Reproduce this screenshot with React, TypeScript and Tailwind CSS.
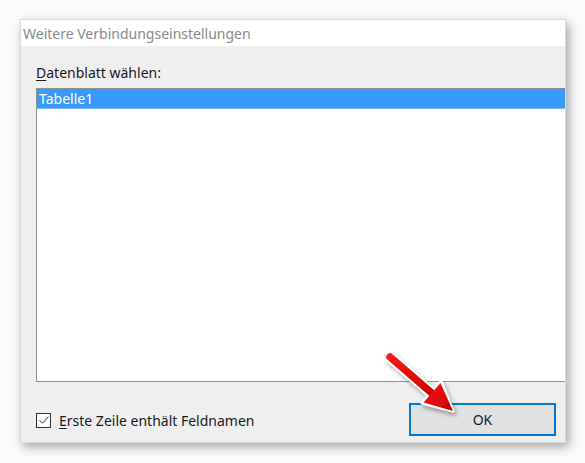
import React from "react";

const font = { fontFamily: '"Noto Sans", "Open Sans", Arial, sans-serif' };

function Arrow() {
  // red pointer arrow drawn over the dialog, page coordinates
  return (
    <svg
      className="absolute left-0 top-0 pointer-events-none"
      width={585}
      height={463}
      viewBox="0 0 585 463"
    >
      <defs>
        <filter id="sh" x="-20%" y="-20%" width="140%" height="140%">
          <feDropShadow dx="2" dy="3" stdDeviation="2" floodColor="#000" floodOpacity="0.35" />
        </filter>
        <linearGradient id="rd" x1="0" y1="0" x2="1" y2="1">
          <stop offset="0" stopColor="#f41a1a" />
          <stop offset="1" stopColor="#cc0000" />
        </linearGradient>
      </defs>
      <g filter="url(#sh)">
        <line x1="390" y1="357" x2="434" y2="395" stroke="#fff" strokeWidth="11" strokeLinecap="round" />
        <polygon points="453,411 422,403 441,381" fill="#fff" stroke="#fff" strokeWidth="3" strokeLinejoin="round" />
        <line x1="390" y1="357" x2="434" y2="395" stroke="url(#rd)" strokeWidth="7.5" strokeLinecap="round" />
        <polygon points="453,411 423.5,402.5 440.5,383" fill="url(#rd)" />
      </g>
    </svg>
  );
}

export default function App() {
  return (
    <div className="relative w-[585px] h-[463px] bg-[#fbfbfb] overflow-hidden" style={font}>
      <div className="absolute left-[20px] top-[19px] w-[546px] h-[424px] bg-[#efefef] border border-[#d9d9d9] shadow-[3px_4px_10px_rgba(0,0,0,0.35)] flex flex-col">
        {/* Title bar */}
        <div className="h-[27px] bg-white flex items-center pl-[2px] text-[14px] text-[#8a8a8a] border-b border-[#f0f0f0]">
          Weitere Verbindungseinstellungen
        </div>

        {/* Body */}
        <div className="flex-1 flex flex-col pl-[15px]">
          <div className="mt-[15px] h-[26px] text-[14px] text-[#1a1a1a] leading-[22px]">
            <span className="underline underline-offset-2">D</span>atenblatt wählen:
          </div>
          <div className="h-[294px] bg-white border border-[#8f8f8f] border-r-0">
            <div className="h-[20px] bg-[#3999ff] text-white text-[14px] leading-[19px] pl-[2px] border-b border-[#7cbcff]">
              Tabelle1
            </div>
          </div>

          <div className="flex items-center justify-between mt-[21px] pr-[9px]">
            <label className="flex items-center gap-[8px] text-[14px] text-[#1a1a1a] mt-[1px]">
              <span className="w-[15px] h-[15px] border border-[#333] bg-white flex items-center justify-center">
                <svg width="12" height="12" viewBox="0 0 12 12">
                  <path d="M1.5 6.2 L4.5 9.2 L10.6 2.6" fill="none" stroke="#333" strokeWidth="1" />
                </svg>
              </span>
              <span>
                <span className="underline underline-offset-2">E</span>rste Zeile enthält Feldnamen
              </span>
            </label>
            <button className="w-[147px] h-[33px] bg-[#e1e1e1] border-2 border-[#0078d7] text-[14px] text-[#1a1a1a]">
              OK
            </button>
          </div>
        </div>
      </div>
      <Arrow />
    </div>
  );
}
